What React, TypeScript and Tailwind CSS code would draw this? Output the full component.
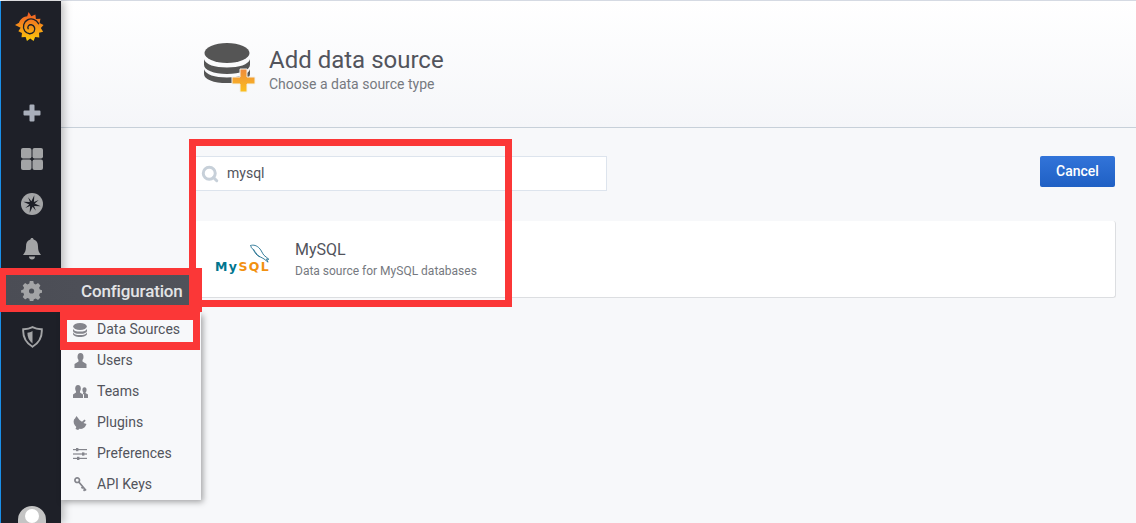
import { Search } from 'lucide-react';

const font = { fontFamily: 'Roboto, sans-serif' };

const GrafanaLogo = () => (
  <svg width="29" height="31" viewBox="0 0 32 32" preserveAspectRatio="none">
    <defs>
      <linearGradient id="gf" x1="0" y1="0" x2="0" y2="1">
        <stop offset="0" stopColor="#f05a28" />
        <stop offset="1" stopColor="#fbca0a" />
      </linearGradient>
    </defs>
    <path
      fill="url(#gf)"
      d="M15 0l3 4.500 4.500-2 .6 4.800 5-.3-1 4.300 4.400 2-3 3.200 2.500 3.800-4.500 1.200.3 4.800-4.600-.6-1.700 4.300-3.700-2.700-3.600 2.700-1.500-4.300-4.500.4.500-4.500-4-1.700 2.500-3.600L0 13.500l4.400-2.500C6 7 10 4.500 13.500 4.300z"
    />
    <path
      fill="none"
      stroke="#1e2028"
      strokeWidth="1.500"
      strokeLinecap="round"
      d="M26 12c-2.500-4.500-8-6-12-4-4.500 2-6 7.500-3.300 11.500 2.700 3.700 8 3.700 10.300.7 1.800-2.700.5-6.500-3-7-2.800-.4-4.600 2-3.500 4"
    />
  </svg>
);

const DatabaseGlyph = ({ className }: { className: string }) => (
  <svg className={className} viewBox="0 0 48 44" preserveAspectRatio="none" fill="currentColor">
    <ellipse cx="24" cy="11" rx="23.500" ry="11" />
    <path d="M0 18c2 6 11 9 24 9s22-3 24-9v6c0 6-10 10-24 10S0 30 0 24z" />
    <path d="M0 29c2 6 11 9 24 9s22-3 24-9v5c0 6-10 10-24 10S0 40 0 34z" />
  </svg>
);

const sideIcons = {
  plus: (
    <svg width="18" height="18" viewBox="0 0 18 18" fill="#a9afbb">
      <path d="M6.500 1.500a1 1 0 0 1 1-1h3a1 1 0 0 1 1 1v5h5a1 1 0 0 1 1 1v3a1 1 0 0 1-1 1h-5v5a1 1 0 0 1-1 1h-3a1 1 0 0 1-1-1v-5h-5a1 1 0 0 1-1-1v-3a1 1 0 0 1 1-1h5z" />
    </svg>
  ),
  dashboard: (
    <svg width="22" height="22" viewBox="0 0 22 22" fill="#a3a4a6">
      <rect width="10.500" height="10.500" rx="2" />
      <rect x="11.500" width="10.500" height="10.500" rx="2" />
      <rect y="11.500" width="10.500" height="10.500" rx="2" />
      <rect x="11.500" y="11.500" width="10.500" height="10.500" rx="2" />
    </svg>
  ),
  explore: (
    <svg width="22" height="22" viewBox="0 0 22 22">
      <circle cx="11" cy="11" r="11" fill="#a3a4a6" />
      <path
        fill="#1e2028"
        transform="rotate(15 11 11)"
        d="M11 2l1.300 6.500 4.200-3-3 4.200L20 11l-6.500 1.300 3 4.200-4.200-3L11 20l-1.300-6.500-4.200 3 3-4.200L2 11l6.500-1.300-3-4.200 4.200 3z"
      />
    </svg>
  ),
  bell: (
    <svg width="18" height="22" viewBox="0 0 18 22" fill="#a3a4a6">
      <path d="M9 0c1 0 1.500.7 1.600 1.500C13.800 2.300 15 5 15 8.500c0 3.500.8 6 3 8.500H0c2.200-2.500 3-5 3-8.500 0-3.500 1.200-6.200 4.400-7C7.500.7 8 0 9 0z" />
      <path d="M6 18.500h6c0 1.800-1.300 3-3 3s-3-1.200-3-3z" />
    </svg>
  ),
  shield: (
    <svg width="21" height="22" viewBox="0 0 21 22" fill="none">
      <path d="M10.500 1.200c3 1.600 6 2.100 9.300 2 .5 7.700-2.700 13.700-9.300 17.600C3.900 16.900.7 10.900 1.200 3.200c3.300.1 6.300-.4 9.300-2z" stroke="#a3a4a6" strokeWidth="1.900" />
      <path d="M10.500 5v12.500C7 14.700 5.300 11 5.400 6.700 7.300 6.700 8.800 6 10.500 5z" fill="#a3a4a6" />
    </svg>
  ),
};

const GearIcon = () => (
  <svg width="22" height="22" viewBox="0 0 22 22" fill="#a3a4a6">
    <path
      fillRule="evenodd"
      d="M9 0h4l.6 3 2.200.9L18.400 2.300l2.800 2.800-1.600 2.600.9 2.200L23 10.500v3l-2.500.6-.9 2.200 1.600 2.600-2.800 2.800-2.600-1.600-2.200.9L13 23H9l-.6-2.500-2.200-.9-2.600 1.600-2.800-2.800 1.600-2.600-.9-2.200L-1 13.500v-3l2.500-.6.900-2.200L.8 5.100l2.800-2.800 2.600 1.600 2.200-.9zM11 8.500a3 3 0 1 0 0 6 3 3 0 0 0 0-6z"
      transform="translate(1 1) scale(.87)"
    />
  </svg>
);

const subIcons = {
  users: (
    <svg width="13" height="15" viewBox="0 0 13 15" fill="#84858c">
      <ellipse cx="6.500" cy="3.800" rx="3" ry="3.800" />
      <path d="M4.500 6.500h4v2l4 2.500v4H.5v-4l4-2.500z" />
    </svg>
  ),
  teams: (
    <svg width="15" height="13" viewBox="0 0 15 13" fill="#84858c">
      <ellipse cx="5" cy="3.500" rx="2.800" ry="3.500" />
      <path d="M3 6h4v1.500l3 2V13H0V9.500l3-2z" />
      <ellipse cx="11.500" cy="5" rx="2.100" ry="2.700" />
      <path d="M11 13V9.500L9.800 8.700 10.500 7h2v1l2.500 1.500V13z" />
    </svg>
  ),
  plugins: (
    <svg width="14" height="14" viewBox="0 0 14 14" fill="#84858c">
      <path d="M3.500 0l3 4 2.500 1.800L11.500 3.500l1.200 1.200-2.200 2.300 3 1-1 2c-1 2-3.500 3.400-6 2.800L5 14l-2.500-1 .8-2C1 9 0 6 1 3.500L2 2.500z" />
    </svg>
  ),
  prefs: (
    <svg width="14" height="12" viewBox="0 0 14 12" fill="#84858c">
      <rect y="1" width="14" height="1.200" />
      <rect y="5.400" width="14" height="1.200" />
      <rect y="9.800" width="14" height="1.200" />
      <rect x="3" width="2.400" height="3.200" />
      <rect x="9" y="4.400" width="2.400" height="3.200" />
      <rect x="4" y="8.800" width="2.400" height="3.200" />
    </svg>
  ),
  keys: (
    <svg width="13" height="15" viewBox="0 0 13 15" fill="none" stroke="#84858c">
      <circle cx="3.200" cy="3.200" r="2.300" strokeWidth="1.700" />
      <path d="M4.800 5l7.200 8.500M9 10l-1.500 1.300M11 12.400l-1.500 1.300" strokeWidth="1.800" />
    </svg>
  ),
};

const SideItem = ({ children, className = 'h-[45px]' }: { children: React.ReactNode; className?: string }) => (
  <div className={`flex items-center justify-center pl-[2px] ${className}`}>{children}</div>
);

const SubItem = ({ icon, label }: { icon: React.ReactNode; label: string }) => (
  <div className="flex h-[31px] items-center text-[14px] text-[#52545c]">
    <span className="flex w-[36px] justify-center pl-[2px]">{icon}</span>
    {label}
  </div>
);

export default function App() {
  return (
    <div className="relative flex h-[523px] w-[1136px] overflow-hidden bg-[#f7f8fa]" style={font}>
      {/* sidemenu */}
      <aside className="z-10 mt-px flex w-[61px] shrink-0 flex-col border-l border-[#1a8fe8] bg-[#1e2028] shadow-[3px_0_8px_rgba(0,0,0,0.25)]">
        <div className="flex h-[56px] items-center pb-[3px] pl-[14px]">
          <GrafanaLogo />
        </div>
        <div className="h-[33px]" />
        <SideItem className="h-[46px]">{sideIcons.plus}</SideItem>
        <SideItem>{sideIcons.dashboard}</SideItem>
        <SideItem>{sideIcons.explore}</SideItem>
        <SideItem>{sideIcons.bell}</SideItem>
        <div className="h-[43px]" />
        <SideItem>{sideIcons.shield}</SideItem>
        <div className="mt-auto flex justify-center pl-[2px]">
          <div className="relative h-[17px] w-[28px] overflow-hidden rounded-t-full bg-[#c4c4c4]">
            <div className="mx-auto mt-[3px] h-[14px] w-[14px] rounded-full bg-white" />
          </div>
        </div>
      </aside>

      {/* page */}
      <main className="flex min-w-0 flex-1 flex-col">
        <header className="flex h-[128px] items-start border-t border-b border-t-[#d5dae3] border-b-[#c7d0d9] bg-gradient-to-b from-white to-[#f5f6f9] pl-[143px] pt-[42px]">
          <div className="relative mr-[13px] h-[51px] w-[52px]">
            <DatabaseGlyph className="h-[40px] w-[46px] text-[#555555]" />
            <span className="absolute left-[27px] top-[25px] flex h-[25px] w-[25px] items-center justify-center">
              <svg width="25" height="25" viewBox="0 0 25 25">
                <defs>
                  <linearGradient id="pl" x1="0" y1="0" x2="0" y2="1">
                    <stop offset="0" stopColor="#ef8a3c" />
                    <stop offset="1" stopColor="#fbc01e" />
                  </linearGradient>
                </defs>
                <path d="M9 1h7v8h8v7h-8v8H9v-8H1V9h8z" fill="url(#pl)" stroke="#f3f1ec" strokeWidth="1" />
              </svg>
            </span>
          </div>
          <div className="pt-[2px]">
            <h1 className="text-[24px] leading-[30px] text-[#52545c]">Add data source</h1>
            <p className="text-[14px] leading-[18px] text-[#767980]">Choose a data source type</p>
          </div>
        </header>

        <section className="flex flex-col pl-[134px] pr-[20px] pt-[28px]">
          <div className="flex items-start justify-between">
            <div className="flex h-[35px] w-[412px] items-center border border-[#dde4ed] bg-white pl-[5px] text-[14px] text-[#52545c]">
              <Search size={18} strokeWidth={4} className="mr-[8px] text-[#c7d0d9]" />
              mysql
            </div>
            <button className="mr-px h-[31px] w-[75px] rounded-[2px] bg-gradient-to-b from-[#3274d9] to-[#1f60c4] text-[14px] font-medium text-white">
              Cancel
            </button>
          </div>

          <div className="mt-[30px] flex h-[77px] items-center rounded-[3px] border-r border-b border-[#dcdee1] bg-white">
            <div className="relative ml-[20px] h-[40px] w-[60px] shrink-0">
              <svg className="absolute left-[34px] top-[5px]" width="22" height="21" viewBox="0 0 26 26" fill="none" stroke="#1e6f8f" strokeWidth="1.100">
                <path d="M1 2c4-1.500 8 0 11 3 3 3 4 7 6 9 1.500 1.500 4 3 6 5l-3-.5 2 4-5-4c-3-2-7-3-9-6-2-3-4-5-7-8.500 0-1 0-1.500-1-2z" />
                <path d="M5 6.500c1 4 4 8 8 9.500" />
              </svg>
              <span className="absolute left-0 top-[20px] whitespace-nowrap text-[12.500px] font-bold leading-[16px] tracking-[1.4px]" style={{ fontFamily: '"DejaVu Sans", sans-serif' }}>
                <span className="text-[#00758f]">My</span>
                <span className="text-[#f29111]">SQL</span>
              </span>
            </div>
            <div className="ml-[20px] pt-px">
              <div className="text-[16px] leading-[20px] text-[#52545c]">MySQL</div>
              <div className="mt-[3px] text-[12px] leading-[16px] text-[#767980]">Data source for MySQL databases</div>
            </div>
          </div>
        </section>
      </main>

      {/* hovered section of the side menu */}
      <div className="absolute left-[6px] top-[275px] z-20 flex h-[30px] w-[183px] items-center bg-gradient-to-r from-[#4b4d55] to-[#50525a]">
        <span className="ml-[15px] mt-[2px]">
          <GearIcon />
        </span>
        <span className="ml-[38px] mt-[3px] text-[17px] tracking-[-0.15px] font-medium text-[#e3e4e6]">Configuration</span>
      </div>

      <div className="absolute left-[61px] top-[313px] z-20 h-[187px] w-[140px] bg-[#f7f8fa] pt-px shadow-[2px_2px_6px_rgba(0,0,0,0.35)]">
        <SubItem icon={<DatabaseGlyph className="h-[14px] w-[14px] text-[#84858c]" />} label="Data Sources" />
        <SubItem icon={subIcons.users} label="Users" />
        <SubItem icon={subIcons.teams} label="Teams" />
        <SubItem icon={subIcons.plugins} label="Plugins" />
        <SubItem icon={subIcons.prefs} label="Preferences" />
        <SubItem icon={subIcons.keys} label="API Keys" />
      </div>

      {/* red annotation frames */}
      <div className="pointer-events-none absolute left-[189px] top-[139px] z-10 h-[168px] w-[323px] border-[7px] border-[#fb3737]" />
      <div className="pointer-events-none absolute left-0 top-[268px] z-30 h-[44px] w-[202px] border-y-[7px] border-l-[6px] border-r-[13px] border-[#fb3737]" />
      <div className="pointer-events-none absolute left-[60px] top-[312px] z-30 h-[38px] w-[140px] border-y-[8px] border-x-[7px] border-[#fb3737]" />
    </div>
  );
}
